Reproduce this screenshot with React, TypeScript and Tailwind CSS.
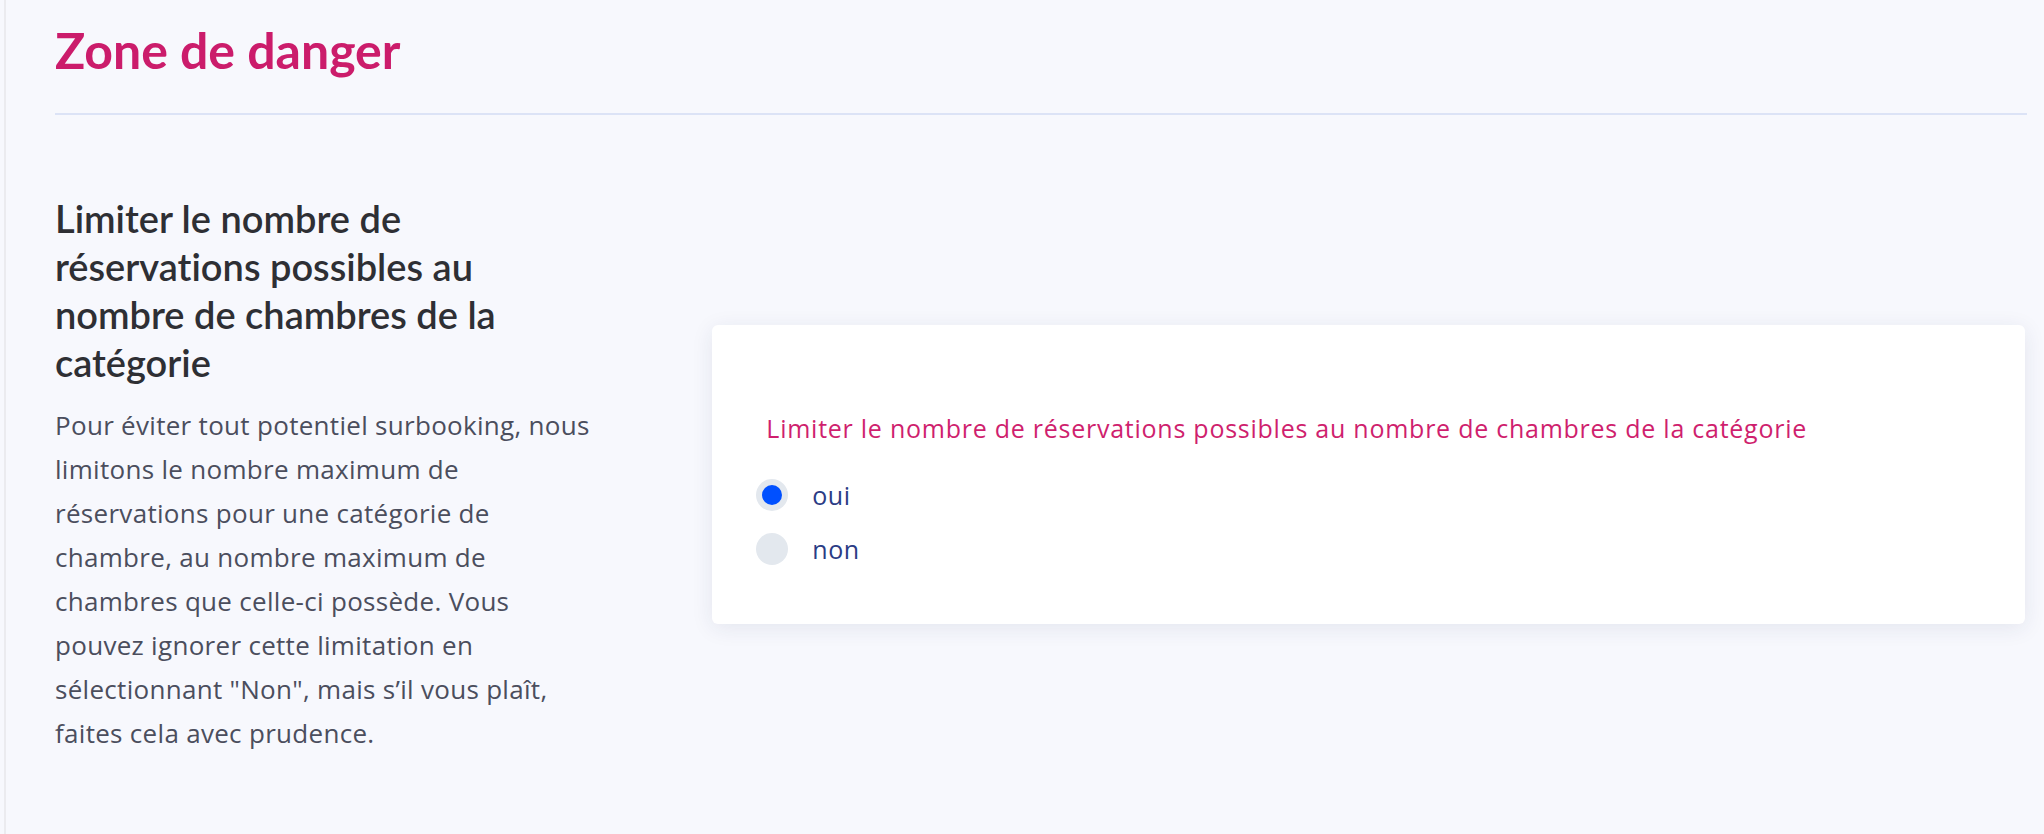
import { useState } from 'react';

const options = [
  { value: 'oui', label: 'oui' },
  { value: 'non', label: 'non' },
];

export default function App() {
  const [limit, setLimit] = useState('oui');

  return (
    <div className="min-h-screen bg-[#f7f8fd] pl-[4px] font-['Open_Sans',sans-serif] [font-variant-ligatures:none]">
      <main className="min-h-screen border-l-2 border-[#ebebef] pl-[49px] pr-[17px]">
        {/* Titre de la section */}
        <header className="border-b-2 border-[#dce3f6] pt-[25px] pb-[38px]">
          <h1 className="font-['Lato',sans-serif] text-[50px] leading-none font-bold text-[#cb1c6b]">Zone de danger</h1>
        </header>

        {/* Limitation du nombre de réservations */}
        <section className="mt-[79px] grid grid-cols-3 items-center">
          <div className="pr-[112px]">
            <h2 className="max-w-[470px] font-['Lato',sans-serif] text-[38px] leading-[48px] font-semibold text-[#2e2f34]">
              Limiter le nombre de réservations possibles au nombre de chambres de la catégorie
            </h2>
            <p className="mt-[17px] text-[26px] leading-[44px] tracking-[0.3px] text-[#4b4e5d]">
              Pour éviter tout potentiel surbooking, nous limitons le nombre maximum de réservations pour une
              catégorie de chambre, au nombre maximum de chambres que celle-ci possède. Vous pouvez ignorer cette
              limitation en sélectionnant "Non", mais s’il vous plaît, faites cela avec prudence.
            </p>
          </div>

          <div className="col-span-2 mr-[2px] rounded-[6px] bg-white pt-[88px] pb-[59px] pl-[44px] pr-[44px] shadow-[0_4px_22px_rgba(30,40,90,0.09)]">
            <p className="ml-[10px] text-[25px] leading-[1.2] tracking-[0.75px] text-[#cf1f6e]">
              Limiter le nombre de réservations possibles au nombre de chambres de la catégorie
            </p>
            <div className="mt-[36px] flex flex-col gap-[22px]">
              {options.map((opt) => (
                <label key={opt.value} className="flex cursor-pointer items-center gap-[24px]">
                  <input
                    type="radio"
                    name="limit"
                    value={opt.value}
                    checked={limit === opt.value}
                    onChange={() => setLimit(opt.value)}
                    className="sr-only"
                  />
                  <span className="flex h-[32px] w-[32px] items-center justify-center rounded-full bg-[#e3e8ee]">
                    {limit === opt.value && <span className="h-[20px] w-[20px] rounded-full bg-[#0050ff]" />}
                  </span>
                  <span className="text-[25px] leading-[32px] tracking-[0.5px] text-[#2b3c85]">{opt.label}</span>
                </label>
              ))}
            </div>
          </div>
        </section>
      </main>
    </div>
  );
}
